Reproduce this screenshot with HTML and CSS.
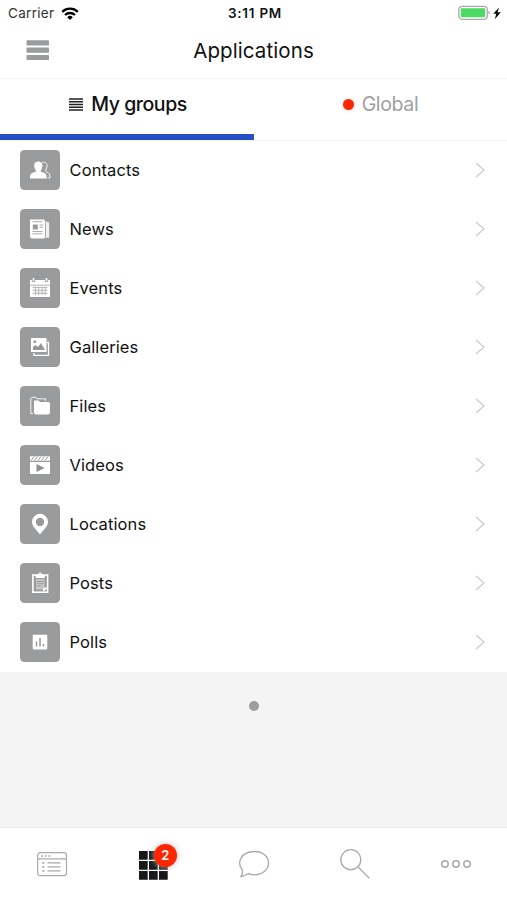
FILE: index.html
```html
<!DOCTYPE html>
<html lang="en">
<head>
<meta charset="utf-8">
<title>Applications</title>
<link rel="stylesheet" href="styles.css">
</head>
<body>
<div class="app">
  <div class="status">
    <div class="carrier"><span>Carrier</span>
      <svg width="18" height="13" viewBox="0 0 18 13" fill="none" stroke="#000" stroke-width="2.3"><path d="M1.2 4.8a11.2 11.2 0 0 1 15.6 0"/><path d="M4 8a7.2 7.2 0 0 1 10 0"/><path d="M6.2 10.2a4 4 0 0 1 5.6 0L9 13z" fill="#000" stroke="none"/></svg>
    </div>
    <div class="time">3:11 PM</div>
    <div class="power">
      <svg width="44" height="16" viewBox="0 0 44 16"><rect x=".8" y="1.3" width="28.4" height="13" rx="3.2" fill="#fff" stroke="#a9a9a9" stroke-width="1.3"/><rect x="2.7" y="3.3" width="24.4" height="9" rx="1" fill="#4cd964"/><path d="M30.5 5.8q3 2 0 4z" fill="#a9a9a9"/><path d="M41 2.500l-5.700 6.200h3l-1.500 5.500 6-7h-3.300z" fill="#000"/></svg>
    </div>
  </div>
  <header class="header">
    <svg class="menu" width="23" height="21" viewBox="0 0 23 21" fill="#9a9b9d"><rect x=".5" y=".3" width="22.500" height="5.200" rx=".8"/><rect x=".5" y="7.600" width="22.500" height="5.200" rx=".8"/><rect x=".5" y="14.900" width="22.500" height="5.200" rx=".8"/></svg>
    <h1 class="title">Applications</h1>
  </header>
  <nav class="tabs">
    <div class="tab tab-active">
      <svg width="14" height="13" viewBox="0 0 14 13" stroke="#222" stroke-width="1.5"><path d="M0 .9h14M0 3.700h14M0 6.500h14M0 9.300h14M0 12.100h14"/></svg>
      <span class="tab-label">My groups</span>
    </div>
    <div class="tab"><i class="live"></i><span class="tab-label">Global</span></div>
  </nav>
  <ul class="list">
    <li class="row"><svg class="tile" viewBox="0 0 40 40"><path d="M22 12.3c4-.8 5.5 1.500 5 4.500-.2 2-1.500 2.700-1.500 4 0 1.500 4.500 1.500 4.500 5.500v1.500h-2.500" fill="none" stroke="#fff" stroke-width=".9"/><path d="M10 28.500c0-4.500 1-5.200 3.500-6 2.500-.7 3-1.200 2.200-2.500-1.200-1.500-1.500-2.800-1.500-4.800 0-2.500 1.800-3.700 4.100-3.700s4.100 1.200 4.100 3.700c0 2-.3 3.300-1.500 4.800-.8 1.300-.3 1.800 2.200 2.500 2.500.8 3.500 1.500 3.500 6z" fill="#fff"/></svg><span class="name">Contacts</span><svg class="chevron" viewBox="0 0 10 16"><path d="M1 1l8 7-8 7"/></svg></li>
    <li class="row"><svg class="tile" viewBox="0 0 40 40"><path d="M24.500 12.300l4.700 1.200v15.200H12" fill="#f0f0f0"/><path d="M10 10.500h14.500v19H12q-2 0-2-2z" fill="#fff"/><path d="M12.500 12.700h10M19.500 16h3.500M19.500 18.300h3.500M12.500 22.500h10M12.500 24.800h10M25.500 13.500v15" stroke="#aaabad"/><path d="M12.800 15.500h5v5h-5z" fill="#999a9c"/></svg><span class="name">News</span><svg class="chevron" viewBox="0 0 10 16"><path d="M1 1l8 7-8 7"/></svg></li>
    <li class="row"><svg class="tile" viewBox="0 0 40 40"><path d="M10 12h20v4.800H10zM10 17.600h20V29H10z" fill="#fff"/><path d="M13.500 10v4M26.500 10v4" stroke="#999a9c" stroke-width="3.400"/><path d="M13.500 10v3.300M26.500 10v3.300" stroke="#fff" stroke-width="1.600"/><path d="M12.500 19.300h15M12.500 22.200h15M12.500 25.200h15M15.500 19v8M18.700 19v8M22 19v8M25.200 19v8" stroke="#a9abad" stroke-width=".9"/></svg><span class="name">Events</span><svg class="chevron" viewBox="0 0 10 16"><path d="M1 1l8 7-8 7"/></svg></li>
    <li class="row"><svg class="tile" viewBox="0 0 40 40"><path d="M14 26v2.300h14.500V15.500H27" fill="none" stroke="#fff" stroke-width="1.300"/><rect x="11" y="11" width="15.500" height="14" fill="#fff"/><path d="M13 23v-3l2.500-2 2.500 2 3-4 4 7zM13.500 13.500h2.500v2.500h-2.500z" fill="#96979a"/></svg><span class="name">Galleries</span><svg class="chevron" viewBox="0 0 10 16"><path d="M1 1l8 7-8 7"/></svg></li>
    <li class="row"><svg class="tile" viewBox="0 0 40 40"><path d="M13 27.500h-2.200V12.300l1-1h4l1.200 1.500h8.500v2" fill="none" stroke="#fff" stroke-width=".9"/><path d="M14 14.500h4.500l1.500 1.500h8.500q1.500 0 1.500 1.500v9q0 2-2 2H16q-2 0-2-2z" fill="#fff"/></svg><span class="name">Files</span><svg class="chevron" viewBox="0 0 10 16"><path d="M1 1l8 7-8 7"/></svg></li>
    <li class="row"><svg class="tile" viewBox="0 0 40 40"><path d="M10 11.300h20v4.500H10zM10 17h20v12H10z" fill="#fff"/><path d="M11 15.500l3-4M14.500 15.500l3-4M18 15.500l3-4M21.500 15.500l3-4M25 15.500l3-4" stroke="#999a9c" stroke-width="1"/><path d="M16.500 19l8 4-8 4z" fill="#8f9092"/></svg><span class="name">Videos</span><svg class="chevron" viewBox="0 0 10 16"><path d="M1 1l8 7-8 7"/></svg></li>
    <li class="row"><svg class="tile" viewBox="0 0 40 40"><path fill-rule="evenodd" d="M20 9.800a8 8 0 0 1 8 8c0 5-4.800 8.200-8 12.700-3.200-4.500-8-7.700-8-12.700a8 8 0 0 1 8-8zm0 4a4.200 4.200 0 1 0 0 8.400 4.200 4.200 0 0 0 0-8.400z" fill="#fff"/></svg><span class="name">Locations</span><svg class="chevron" viewBox="0 0 10 16"><path d="M1 1l8 7-8 7"/></svg></li>
    <li class="row"><svg class="tile" viewBox="0 0 40 40"><rect x="12.900" y="12" width="14.700" height="17.200" fill="#999a9c" stroke="#fff" stroke-width="1.600"/><path d="M15.500 15v-2.500l3-1q0-2 1.700-2t1.700 2l3 1V15zM23 29v-4.500h5z" fill="#fff"/><path d="M16 16h8.500v8l-2 2.500H16z" fill="#c5c6c7"/><path d="M17 18.500h6.500M17 20.700h6.500M17 22.900h4" stroke="#929396" stroke-width=".8"/></svg><span class="name">Posts</span><svg class="chevron" viewBox="0 0 10 16"><path d="M1 1l8 7-8 7"/></svg></li>
    <li class="row"><svg class="tile" viewBox="0 0 40 40"><rect x="12.700" y="12.800" width="14.600" height="14.700" rx="1" fill="#fff"/><path d="M16.500 19.500v5M20 16v8.500M23.500 22v2.500" stroke="#999a9c" stroke-width="1.500"/></svg><span class="name">Polls</span><svg class="chevron" viewBox="0 0 10 16"><path d="M1 1l8 7-8 7"/></svg></li>
  </ul>
  <div class="pager"><i class="page-dot"></i></div>
  <footer class="bar">
    <div class="item"><svg width="32" height="32" viewBox="0 0 32 32" fill="none" stroke="#aaa" stroke-width="1.200"><rect x="1.700" y="4.600" width="28.800" height="23" rx="2.500"/><path d="M2 10.800h28M11.500 14.900h13M11.500 18.900h13M11.500 22.900h13"/><path d="M6.300 14.900h2M6.300 18.900h2M6.300 22.900h2M5 8h2M8.700 8h2M12.400 8h2" stroke-width="1.600"/></svg></div>
    <div class="item"><div class="grid-wrap"><svg width="30" height="30" viewBox="0 0 30 30" fill="#17181b"><path d="M1 1h8.700v8.700H1zM11 1h8.700v8.700H11zM21 1h8.700v8.700H21zM1 11h8.700v8.700H1zM11 11h8.700v8.700H11zM21 11h8.700v8.700H21zM1 21h8.700v8.700H1zM11 21h8.700v8.700H11zM21 21h8.700v8.700H21z"/></svg><span class="badge">2</span></div></div>
    <div class="item"><svg width="32" height="32" viewBox="0 0 32 32" fill="none" stroke="#aaa" stroke-width="1.300"><path d="M4.200 21.800C-1.500 14.500 3 3.500 16.500 3.500c8.300 0 14 5 14 11.500s-5.700 11.800-14 11.800c-2.700 0-4.500-.4-6.200-1.200-2.300 2-4.500 2.700-7.300 3.100 1.400-2.200 1.700-4.500 1.200-6.900z"/></svg></div>
    <div class="item"><svg width="32" height="32" viewBox="0 0 32 32" fill="none" stroke="#aaa" stroke-width="1.300"><circle cx="11.800" cy="11.700" r="10"/><path d="M19 19l11.300 11.300"/></svg></div>
    <div class="item"><svg width="32" height="32" viewBox="0 0 32 32" fill="none" stroke="#aaa" stroke-width="1.500"><circle cx="5" cy="16" r="3.200"/><circle cx="16" cy="16" r="3.200"/><circle cx="27" cy="16" r="3.200"/></svg></div>
  </footer>
</div>
</body>
</html>
```
FILE: styles.css
```css
* { box-sizing: border-box; }
body { margin: 0; background: #fff; font-family: Inter, "Liberation Sans", sans-serif; color: #111; }
svg { display: block; flex: none; }
.app { width: 507px; height: 900px; display: flex; flex-direction: column; overflow: hidden; }
.status { height: 26px; flex: none; display: grid; grid-template-columns: 1fr auto 1fr; align-items: center; padding: 0 5px 0 8px; font-size: 13.500px; }
.carrier { display: flex; align-items: center; gap: 7px; letter-spacing: .3px; color: #333; }
.time { font-weight: 600; font-size: 13.500px; letter-spacing: .75px; color: #111; }
.power { display: flex; justify-content: flex-end; }
.header { height: 53px; flex: none; display: grid; grid-template-columns: 1fr auto 1fr; align-items: center; padding: 0 26px 3px; border-bottom: 1px solid #f3f3f3; }
.title { margin: 0; grid-column: 2; font-size: 20.500px; letter-spacing: .1px; font-weight: 400; line-height: 26px; }
.tabs { height: 62px; flex: none; display: grid; grid-template-columns: 254px 1fr; border-bottom: 1px solid #f3f3f3; }
.tab { display: flex; align-items: center; justify-content: center; gap: 8px; padding-bottom: 11px; font-size: 19.500px; letter-spacing: -.35px; color: #a0a0a0; }
.tab-active { color: #111; font-weight: 500; letter-spacing: -.45px; border-bottom: 6px solid #2750c4; padding: 0 0 5px 2px; }
.live { width: 11px; height: 11px; border-radius: 50%; background: #ff2600; box-shadow: 0 0 5px #ddd; }
.list { margin: 0; padding: 0; list-style: none; flex: none; }
.row { height: 59px; display: flex; align-items: center; padding: 0 22px 2px 20px; }
.tile { width: 40px; height: 40px; border-radius: 4.500px; background: #999b9d; }
.name { flex: 1; padding-left: 9.500px; font-size: 16.500px; letter-spacing: .1px; }
.chevron { width: 10px; height: 16px; fill: none; stroke: #cbcbcd; stroke-width: 1.200; }
.pager { flex: 1; background: #f4f4f4; display: flex; justify-content: center; padding-top: 29px; }
.page-dot { width: 10px; height: 10px; border-radius: 50%; background: #9d9d9d; }
.bar { height: 73px; flex: none; display: grid; grid-template-columns: repeat(5, 1fr); padding: 20px 0 0 1px; border-top: 1px solid #e9e9e9; }
.item { display: flex; justify-content: center; align-items: flex-start; }
.grid-wrap { position: relative; padding-top: 2px; }
.badge { position: absolute; top: -4px; left: 16px; width: 23px; height: 23px; border-radius: 50%; background: #ff2600; color: #fff; font-size: 13px; font-weight: 600; line-height: 23px; text-align: center; box-shadow: 0 0 6px #bbb; }
```
